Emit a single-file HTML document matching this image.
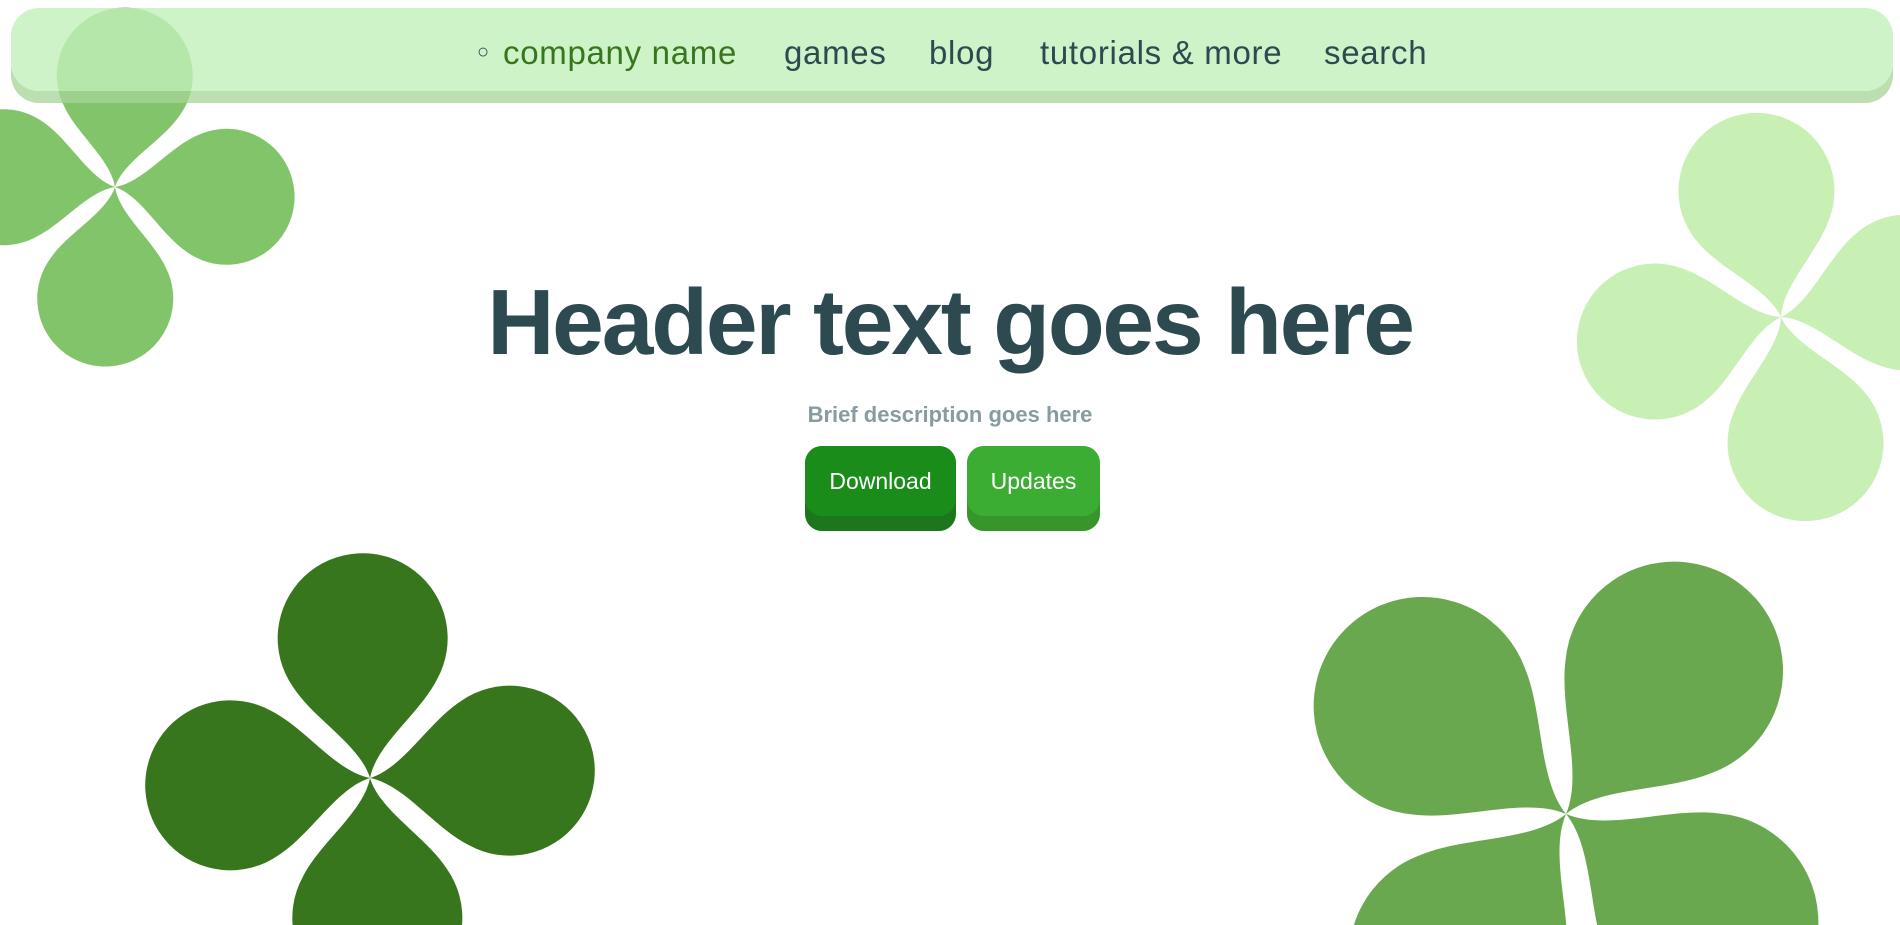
<!DOCTYPE html>
<html><head><meta charset="utf-8"><style>
html,body{margin:0;padding:0;width:1900px;height:925px;overflow:hidden;background:#fff;font-family:"Liberation Sans",sans-serif}
svg.bg{position:absolute;left:0;top:0}
.nav{position:absolute;left:11px;top:8px;width:1882px;height:95px}
.nav .top{position:absolute;left:0;top:0;right:0;height:83px;border-radius:28px;background:rgba(195,240,186,0.8);box-shadow:0 12px 0 rgba(165,212,152,0.75)}
.nav span{position:absolute;top:26px;font-size:33px;color:#2d4a50;letter-spacing:0.7px;white-space:nowrap}
h1{position:absolute;left:0;width:1900px;top:262px;margin:0;text-align:center;font-size:93px;font-weight:bold;color:#2d4a50;letter-spacing:-2.2px;line-height:120px}
.desc{position:absolute;left:0;width:1900px;top:402px;text-align:center;font-size:22px;font-weight:bold;color:#889ba0}
.btn{position:absolute;top:446px;height:85px;border-radius:17px;color:#fff;font-size:23px}
.btn div{position:absolute;left:0;right:0;top:0;height:70px;border-radius:17px;text-align:center;line-height:70px}
</style></head><body>
<svg class="bg" width="1900" height="925" viewBox="0 0 1900 925">
<defs>
<path id="lf" d="M0,0 C-0.1,-0.4 -0.62,-0.72 -0.85,-1.12 A1,1 0 1 1 0.85,-1.12 C0.62,-0.72 0.1,-0.4 0,0Z"/>
<g id="cl"><use href="#lf"/><use href="#lf" transform="rotate(90)"/><use href="#lf" transform="rotate(180)"/><use href="#lf" transform="rotate(270)"/></g>
</defs>
<use href="#cl" fill="#82c46a" transform="translate(115,187) rotate(5) scale(68)"/>
<use href="#cl" fill="#c8f0b4" transform="translate(1781,317) rotate(-11) scale(78)"/>
<use href="#cl" fill="#38761d" transform="translate(370,778) rotate(-3) scale(85)"/>
<use href="#cl" fill="#6aa84f" transform="translate(1566,814) rotate(37) scale(109)"/>
</svg>
<div class="nav"><div class="top"></div>
<span style="left:466px;font-size:20px;top:33px">○</span>
<span style="left:492px;color:#38761d">company name</span>
<span style="left:773px">games</span>
<span style="left:918px">blog</span>
<span style="left:1029px">tutorials &amp; more</span>
<span style="left:1313px">search</span>
</div>
<h1>Header text goes here</h1>
<div class="desc">Brief description goes here</div>
<div class="btn" style="left:805px;width:151px;background:#1b761c"><div style="background:#1a8c1a">Download</div></div>
<div class="btn" style="left:967px;width:133px;background:#38952c"><div style="background:#3cad33">Updates</div></div>
</body></html>
